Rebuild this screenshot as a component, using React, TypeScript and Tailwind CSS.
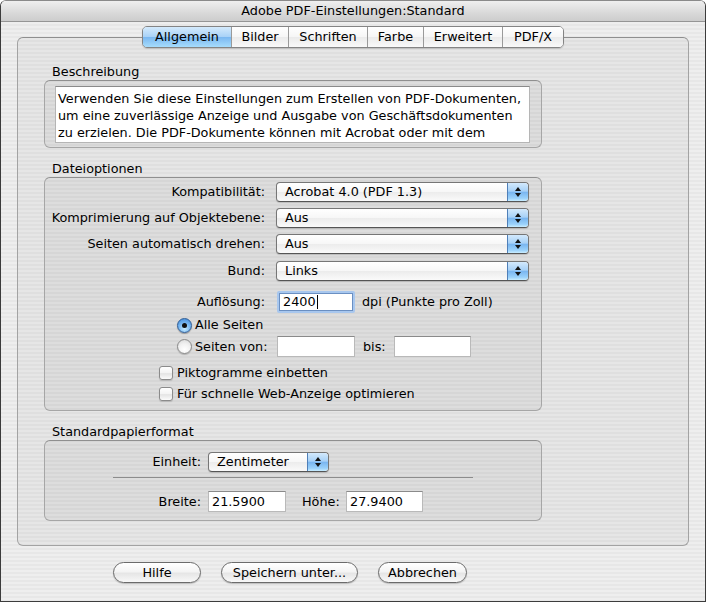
import type { ReactNode } from "react";

const tabs = [
  { label: "Allgemein", w: "w-[88px]", active: true },
  { label: "Bilder", w: "w-[57px]" },
  { label: "Schriften", w: "w-[79px]" },
  { label: "Farbe", w: "w-[56px]" },
  { label: "Erweitert", w: "w-[79px]" },
  { label: "PDF/X", w: "w-[61px]" },
];

const descLines = [
  "Verwenden Sie diese Einstellungen zum Erstellen von PDF-Dokumenten,",
  "um eine zuverlässige Anzeige und Ausgabe von Geschäftsdokumenten",
  "zu erzielen. Die PDF-Dokumente können mit Acrobat oder mit dem",
];

function Stepper() {
  return (
    <div className="flex w-[21px] flex-col items-center justify-center gap-[2px] rounded-r-[3px] border-l border-[#4f7fb8] bg-[linear-gradient(180deg,#d3e9fc_0%,#a7d1f7_45%,#7ab6f0_52%,#9bd2fb_85%,#c9edff_100%)]">
      <svg width="6" height="4" viewBox="0 0 6 4">
        <path d="M3 0L6 4H0z" fill="#111" />
      </svg>
      <svg width="6" height="4" viewBox="0 0 6 4">
        <path d="M0 0h6L3 4z" fill="#111" />
      </svg>
    </div>
  );
}

function Popup({ value, className }: { value: string; className: string }) {
  return (
    <div
      className={`flex h-[20px] overflow-hidden rounded-[4px] border border-[#767676] border-b-[#555] bg-[linear-gradient(180deg,#ffffff_0%,#f7f7f7_48%,#ececec_52%,#fafafa_100%)] shadow-[0_1px_1px_rgba(0,0,0,0.15)] ${className}`}
    >
      <span className="flex-1 pl-[8px] leading-[18px]">{value}</span>
      <Stepper />
    </div>
  );
}

function Field({ value, className }: { value?: string; className: string }) {
  return (
    <div className={`h-[21px] border border-[#b9b9b9] border-t-[#8a8a8a] bg-white pl-[3px] leading-[19px] ${className}`}>
      {value}
    </div>
  );
}

function Radio({ on }: { on?: boolean }) {
  return on ? (
    <span className="flex h-[15px] w-[15px] items-center justify-center rounded-full border border-[#2d5c96] bg-[radial-gradient(circle_at_50%_75%,#c6ebff_0%,#76b6f1_50%,#3b84d4_100%)] shadow-[0_1px_1px_rgba(0,0,0,0.3)]">
      <span className="h-[5px] w-[5px] rounded-full bg-[#111]" />
    </span>
  ) : (
    <span className="h-[15px] w-[15px] rounded-full border border-[#8a8a8a] bg-[radial-gradient(circle_at_50%_75%,#ffffff_0%,#f1f1f1_50%,#d6d6d6_100%)] shadow-[0_1px_1px_rgba(0,0,0,0.2)]" />
  );
}

function Checkbox() {
  return (
    <span className="h-[14px] w-[14px] rounded-[3px] border border-[#8b8b8b] bg-[linear-gradient(180deg,#ffffff_0%,#f3f3f3_50%,#e4e4e4_55%,#fbfbfb_100%)] shadow-[0_1px_1px_rgba(0,0,0,0.15)]" />
  );
}

function Row({ label, className, children }: { label: string; className: string; children: ReactNode }) {
  return (
    <div className={`flex h-[20px] items-center ${className}`}>
      <span className="w-[220px] text-right">{label}</span>
      <div className="ml-[11px]">{children}</div>
    </div>
  );
}

function Button({ label, className }: { label: string; className: string }) {
  return (
    <div
      className={`flex h-[21px] items-center justify-center rounded-full border border-[#6b6b6b] bg-[linear-gradient(180deg,#ffffff_0%,#f4f4f4_45%,#e6e6e6_55%,#f8f8f8_100%)] shadow-[0_1px_1px_rgba(0,0,0,0.2)] ${className}`}
    >
      {label}
    </div>
  );
}

export default function App() {
  return (
    <div className="h-[602px] w-[706px] bg-white font-['DejaVu_Sans',sans-serif] text-[12.8px] leading-[16px] text-black">
      <div className="flex h-full flex-col overflow-hidden rounded-t-[6px] border border-[#3c3c3c] border-t-[#8a8a8a]">
        <div className="flex h-[21px] items-center justify-center border-b border-[#959595] bg-[linear-gradient(180deg,#efefef_0%,#d9d9d9_60%,#cdcdcd_100%)]">
          Adobe PDF-Einstellungen:Standard
        </div>

        <div className="flex flex-1 flex-col bg-[repeating-linear-gradient(180deg,#eeeeee_0px,#eeeeee_2px,#e7e7e7_2px,#e7e7e7_4px)] px-[16px]">
          <div className="relative z-10 mt-[4px] flex justify-center">
            <div className="flex h-[22px] overflow-hidden rounded-[5px] border border-[#848484] shadow-[0_1px_1px_rgba(0,0,0,0.15)]">
              {tabs.map((t, i) => (
                <div
                  key={t.label}
                  className={`flex items-center justify-center ${t.w} ${i > 0 ? "border-l border-[#9a9a9a]" : ""} ${
                    t.active
                      ? "bg-[linear-gradient(180deg,#d4eafc_0%,#a9d2f7_48%,#7bb8f1_52%,#a6dcfc_100%)]"
                      : "bg-[linear-gradient(180deg,#ffffff_0%,#f6f6f6_48%,#ebebeb_52%,#f9f9f9_100%)]"
                  }`}
                >
                  {t.label}
                </div>
              ))}
            </div>
          </div>

          <div className="-mt-[11px] h-[509px] rounded-[6px] border border-[#a3a3a3] border-t-[#8e8e8e] bg-black/[0.03] pl-[26px] pt-[26px]">
            <div className="pl-[8px]">Beschreibung</div>
            <div className="h-[68px] w-[498px] rounded-[6px] border border-[#a6a6a6] border-t-[#8f8f8f] bg-black/[0.04] pl-[10px] pt-[5px]">
              <div className="h-[57px] w-[475px] overflow-hidden border border-[#b5b5b5] border-t-[#8a8a8a] bg-white pl-[2px] pt-[3px] leading-[17px]">
                {descLines.map((l) => (
                  <div key={l} className="whitespace-nowrap">
                    {l}
                  </div>
                ))}
              </div>
            </div>

            <div className="mt-[13px] pl-[8px]">Dateioptionen</div>
            <div className="flex h-[234px] w-[498px] flex-col rounded-[6px] border border-[#a6a6a6] border-t-[#8f8f8f] bg-black/[0.04]">
              <Row label="Kompatibilität:" className="mt-[4px]">
                <Popup value="Acrobat 4.0 (PDF 1.3)" className="w-[253px]" />
              </Row>
              <Row label="Komprimierung auf Objektebene:" className="mt-[6px]">
                <Popup value="Aus" className="w-[253px]" />
              </Row>
              <Row label="Seiten automatisch drehen:" className="mt-[6px]">
                <Popup value="Aus" className="w-[253px]" />
              </Row>
              <Row label="Bund:" className="mt-[7px]">
                <Popup value="Links" className="w-[253px]" />
              </Row>

              <div className="mt-[10px] flex h-[22px] items-center">
                <span className="w-[220px] text-right">Auflösung:</span>
                <div className="ml-[12px] h-[22px] w-[78px] rounded-[2px] bg-[#a8c7ee] p-[2px]">
                  <div className="flex h-full items-center border border-[#6a8fc2] bg-white pl-[3px]">
                    2400
                    <span className="ml-[1px] h-[14px] w-px bg-black" />
                  </div>
                </div>
                <span className="ml-[7px]">dpi (Punkte pro Zoll)</span>
              </div>

              <div className="ml-[132px] mt-[4px] flex h-[16px] items-center gap-[3px]">
                <Radio on />
                <span>Alle Seiten</span>
              </div>
              <div className="ml-[132px] mt-[3px] flex h-[21px] items-center">
                <Radio />
                <span className="ml-[3px] w-[82px]">Seiten von:</span>
                <Field className="w-[78px]" />
                <span className="ml-[8px] w-[31px]">bis:</span>
                <Field className="w-[77px]" />
              </div>

              <div className="ml-[114px] mt-[8px] flex h-[16px] items-center gap-[4px]">
                <Checkbox />
                <span>Piktogramme einbetten</span>
              </div>
              <div className="ml-[114px] mt-[5px] flex h-[16px] items-center gap-[4px]">
                <Checkbox />
                <span>Für schnelle Web-Anzeige optimieren</span>
              </div>
            </div>

            <div className="mt-[13px] pl-[8px]">Standardpapierformat</div>
            <div className="flex h-[81px] w-[498px] flex-col rounded-[6px] border border-[#a6a6a6] border-t-[#8f8f8f] bg-black/[0.04]">
              <div className="mt-[11px] flex h-[20px] items-center">
                <span className="w-[156px] text-right">Einheit:</span>
                <Popup value="Zentimeter" className="ml-[7px] w-[121px]" />
              </div>
              <div className="ml-[68px] mt-[5px] h-px w-[360px] bg-[#8c8c8c]" />
              <div className="mt-[13px] flex h-[21px] items-center">
                <span className="w-[156px] text-right">Breite:</span>
                <Field value="21.5900" className="ml-[7px] w-[78px]" />
                <span className="ml-[16px] w-[44px]">Höhe:</span>
                <Field value="27.9400" className="w-[77px]" />
              </div>
            </div>
          </div>

          <div className="ml-[96px] mt-[16px] flex gap-[20px]">
            <Button label="Hilfe" className="w-[88px]" />
            <Button label="Speichern unter..." className="w-[137px]" />
            <Button label="Abbrechen" className="w-[89px]" />
          </div>
        </div>
      </div>
    </div>
  );
}
